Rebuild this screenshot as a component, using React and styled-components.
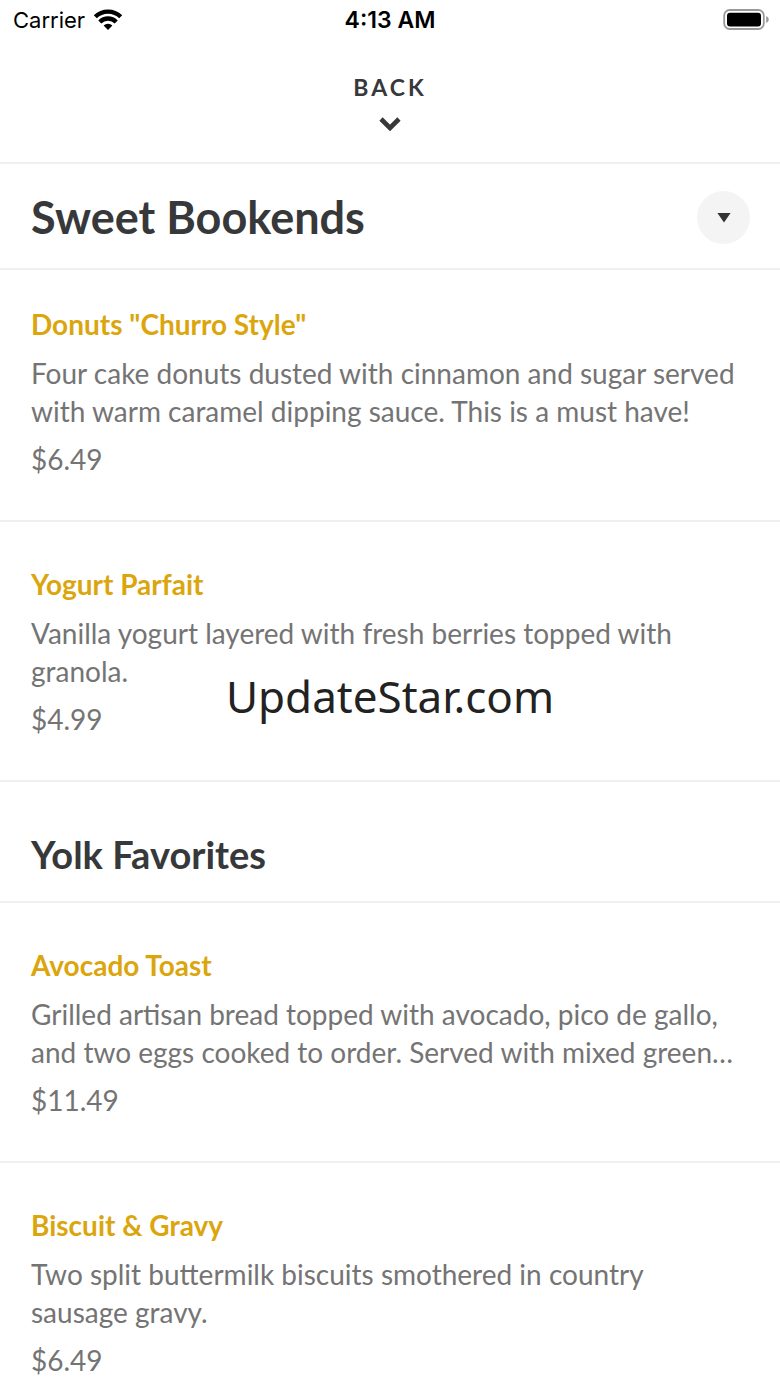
import React from "react";
import styled, { createGlobalStyle } from "styled-components";

/* ---------------------------------- Data ---------------------------------- */
const sections = [
  {
    title: "Sweet Bookends",
    items: [
      {
        name: 'Donuts "Churro Style"',
        description:
          "Four cake donuts dusted with cinnamon and sugar served with warm caramel dipping sauce. This is a must have!",
        price: "$6.49",
      },
      {
        name: "Yogurt Parfait",
        description:
          "Vanilla yogurt layered with fresh berries topped with granola.",
        price: "$4.99",
      },
    ],
  },
  {
    title: "Yolk Favorites",
    items: [
      {
        name: "Avocado Toast",
        description:
          "Grilled artisan bread topped with avocado, pico de gallo, and two eggs cooked to order. Served with mixed green…",
        price: "$11.49",
      },
      {
        name: "Biscuit & Gravy",
        description:
          "Two split buttermilk biscuits smothered in country sausage gravy.",
        price: "$6.49",
      },
    ],
  },
];

/* ---------------------------------- Icons --------------------------------- */
const WifiIcon = () => (
  <svg width="30" height="22" viewBox="0 0 30 22" aria-hidden="true">
    <g fill="none" stroke="#000" strokeWidth="4.3">
      <path d="M2.3 7.8 A18.2 18.2 0 0 1 27.7 7.8" />
      <path d="M6.8 12.9 A11.6 11.6 0 0 1 23.2 12.9" />
    </g>
    <path d="M10.6 16.4 A6.4 6.4 0 0 1 19.4 16.4 L15 21 Z" />
  </svg>
);

const BatteryIcon = () => (
  <svg width="47" height="22" viewBox="0 0 47 22" role="img" aria-label="Battery full">
    <rect x="1.2" y="1" width="39.6" height="19" rx="5.5" fill="none" stroke="#999" strokeWidth="1.8" />
    <rect x="4" y="3.8" width="34" height="13.6" rx="3" />
    <path d="M43.2 7 C46.6 8.5 46.6 12.5 43.2 14 Z" fill="#999" />
  </svg>
);

const ChevronDown = () => (
  <svg width="22" height="14" viewBox="0 0 22 14" aria-hidden="true">
    <path d="M2 2 L11 11 L20 2" fill="none" stroke="#37383a" strokeWidth="4.6" />
  </svg>
);

const Caret = () => (
  <svg width="14" height="12" viewBox="0 0 14 12" aria-hidden="true">
    <path d="M0.4 2 H13.6 L7 11.6 Z" fill="#333" />
  </svg>
);

/* -------------------------------- Components ------------------------------ */
const MenuItem = ({ item, first }) => (
  <Item $first={first}>
    <ItemName>{item.name}</ItemName>
    <ItemText>{item.description}</ItemText>
    <ItemText>{item.price}</ItemText>
  </Item>
);

const App = () => {
  const [current, next] = sections;
  return (
    <>
      <GlobalStyle />
      <Page>
        <StatusBar>
          <Carrier>
            Carrier
            <WifiIcon />
          </Carrier>
          <Clock>4:13 AM</Clock>
          <Battery>
            <BatteryIcon />
          </Battery>
        </StatusBar>
        <NavBar>
          <BackButton type="button">
            BACK
            <ChevronDown />
          </BackButton>
        </NavBar>
        <SectionHeader>
          <h1>{current.title}</h1>
          <RoundButton type="button" aria-label="Choose a section">
            <Caret />
          </RoundButton>
        </SectionHeader>
        <List>
          {current.items.map((item, index) => (
            <MenuItem key={item.name} item={item} first={index === 0} />
          ))}
        </List>
        <SectionTitle>{next.title}</SectionTitle>
        <List>
          {next.items.map((item) => (
            <MenuItem key={item.name} item={item} />
          ))}
        </List>
        <Watermark>UpdateStar.com</Watermark>
      </Page>
    </>
  );
};

/* --------------------------------- Styles --------------------------------- */
const GlobalStyle = createGlobalStyle`
  * {
    box-sizing: border-box;
  }
  body {
    margin: 0;
    background: #fff;
    font-family: Lato, sans-serif;
  }
  h1, h2, h3, p, ul {
    margin: 0;
    padding: 0;
  }
`;

const Page = styled.main`
  position: relative;
  color: #37383a;
`;

const StatusBar = styled.header`
  display: grid;
  grid-template-columns: 1fr auto 1fr;
  align-items: center;
  height: 40px;
  padding: 0 10px;
  font-family: Inter, sans-serif;
  font-size: 22px;
  color: #000;
`;

const Carrier = styled.span`
  display: flex;
  align-items: center;
  gap: 8px;
  padding-left: 3px;
`;

const Clock = styled.span`
  font-size: 23px;
  font-weight: 600;
`;

const Battery = styled.span`
  display: flex;
  justify-content: flex-end;
`;

const NavBar = styled.nav`
  display: flex;
  justify-content: center;
  height: 124px;
  padding-top: 31px;
  border-bottom: 2px solid #f0f0f0;
`;

const BackButton = styled.button`
  display: flex;
  flex-direction: column;
  align-items: center;
  gap: 14px;
  height: 64px;
  padding: 0;
  border: 0;
  background: none;
  font-family: inherit;
  font-size: 23px;
  font-weight: 700;
  line-height: 32px;
  letter-spacing: 3px;
  color: inherit;
`;

const SectionHeader = styled.div`
  display: flex;
  align-items: center;
  justify-content: space-between;
  height: 106px;
  padding: 2px 30px 0 31px;
  border-bottom: 2px solid #f0f0f0;

  h1 {
    font-size: 45px;
    font-weight: 700;
    line-height: 56px;
  }
`;

const RoundButton = styled.button`
  display: flex;
  align-items: center;
  justify-content: center;
  width: 53px;
  height: 53px;
  padding: 0;
  border: 0;
  border-radius: 50%;
  background: #f4f4f4;
`;

const SectionTitle = styled.h2`
  padding: 48px 31px 23px;
  border-bottom: 2px solid #f0f0f0;
  font-size: 38px;
  font-weight: 700;
  line-height: 48px;
`;

const List = styled.ul`
  list-style: none;

  &:last-of-type > li:last-child {
    padding-bottom: 4px;
    border-bottom: 0;
  }
`;

const Item = styled.li`
  display: flex;
  flex-direction: column;
  gap: 10px;
  padding: ${({ $first }) => ($first ? 36 : 44)}px 36px 42px 31px;
  border-bottom: 2px solid #f0f0f0;
  font-size: 28px;
  line-height: 38px;
`;

const ItemName = styled.h3`
  font-size: inherit;
  font-weight: 700;
  line-height: 36px;
  padding-bottom: 2px;
  color: #dba60d;
`;

const ItemText = styled.p`
  color: #747474;
`;

const Watermark = styled.div`
  position: absolute;
  top: 664px;
  left: 0;
  right: 0;
  font-family: "Noto Sans", sans-serif;
  font-size: 44px;
  line-height: 64px;
  text-align: center;
  color: #222;
  pointer-events: none;
`;

export default App;
